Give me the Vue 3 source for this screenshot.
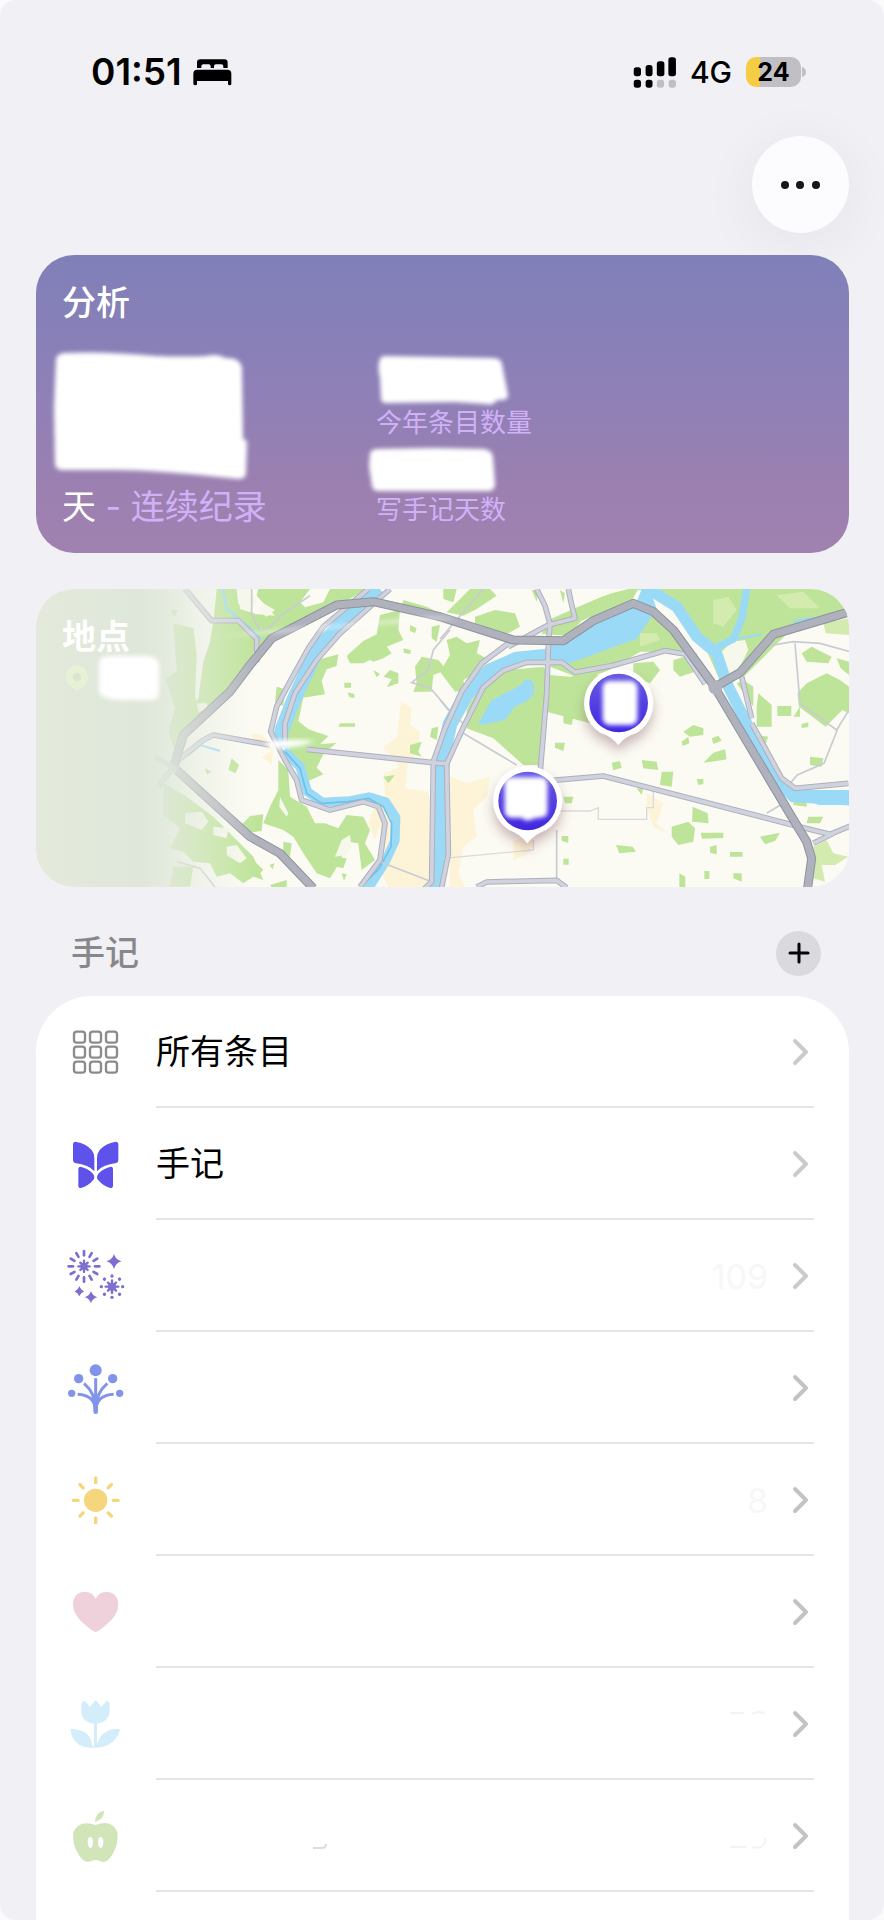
<script setup>
import { ref } from 'vue'

const journals = ref([
    { id: 'all', name: '所有条目', count: '', faded: true },
    { id: 'journal', name: '手记', count: '', faded: true },
    { id: 'fireworks', name: '', count: '109', faded: true },
    { id: 'sprout', name: '', count: '', faded: false },
    { id: 'sun', name: '', count: '8', faded: false },
    { id: 'heart', name: '', count: '', faded: false },
    { id: 'tulip', name: '', count: '', faded: false },
    { id: 'apple', name: '', count: '', faded: false }
])

// coins des neuf carrés de l'icône grille
const cells = []
for (const y of [395, 440, 485]) {
    for (const x of [132, 180, 228]) {
        cells.push({ x, y })
    }
}

const rays = [0, 30, 60, 90, 120, 150, 180, 210, 240, 270, 300, 330]
const sunRays = [0, 45, 90, 135, 180, 225, 270, 315]
</script>

<template>
    <div class="page">
        <!-- Barre d'état -->
        <header class="status">
            <div class="status-left">
                <span class="time">01:51</span>
                <svg class="bed" viewBox="399 86 117 81" aria-hidden="true">
                    <path d="M411 113V97q0-10 10-10h72q10 0 10 10v16h-13v-5q0-6-6-6h-16q-6 0-6 6v5h-10v-5q0-6-6-6h-16q-6 0-6 6v5z" />
                    <path d="M400 161v-31q0-12 12-12h90q12 0 12 12v31q0 4-5 4t-5-4v-9H411v9q0 4-5 4t-6-4z" />
                </svg>
            </div>
            <div class="status-right">
                <svg class="signal" viewBox="101 77 131 94" aria-hidden="true">
                    <rect x="102" y="108" width="22" height="27" rx="8" />
                    <rect x="138" y="101" width="21" height="34" rx="8" />
                    <rect x="172" y="90" width="23" height="45" rx="8" />
                    <rect x="207" y="78" width="23" height="57" rx="8" />
                    <rect x="102" y="146" width="22" height="24" rx="8" />
                    <rect x="138" y="146" width="21" height="24" rx="8" />
                    <rect x="172" y="146" width="22" height="24" rx="8" fill="#c0bfc4" />
                    <rect x="208" y="146" width="22" height="24" rx="8" fill="#c0bfc4" />
                </svg>
                <span class="network">4G</span>
                <div class="battery"><span>24</span></div>
                <svg class="nub" viewBox="0 0 4 10" aria-hidden="true"><path d="M0 0q4 1 4 5t-4 5z" fill="#c0bfc4" /></svg>
            </div>
        </header>

        <nav class="toolbar">
            <button class="more" type="button" aria-label="更多">
                <svg viewBox="0 0 40 10" aria-hidden="true">
                    <circle cx="4" cy="5" r="4" />
                    <circle cx="19" cy="5" r="4" />
                    <circle cx="35" cy="5" r="4" />
                </svg>
            </button>
        </nav>

        <main>
            <!-- Carte des statistiques -->
            <section class="card stats">
                <h2>分析</h2>
                <div class="stats-grid">
                    <div>
                        <svg class="streak-value" viewBox="0 0 200 156" aria-hidden="true">
                            <path class="soft" d="M2 26q40-2 92 3 30 1 50 0 12-3 19 2 15-1 17 10l1 71 4 2-1 32q0 6-8 6Q95 143 52 143L0 143q-7 0-7-7l-1-55 2-49q1-5 8-6z" />
                        </svg>
                        <p class="streak">天 <span>- 连续纪录</span></p>
                    </div>
                    <div>
                        <svg class="year-value" viewBox="0 0 140 80" aria-hidden="true">
                            <path class="soft" d="M4 32q1-3 5-3l108 2q8 0 9 6l6 31q0 5-6 5h-5q-4 6-11 4l-32-2-68 1q-5 0-5-5l-1-20q-3-12 0-19z" />
                        </svg>
                        <p class="label">今年条目数量</p>
                        <svg class="days-value" viewBox="0 0 140 55" aria-hidden="true">
                            <path class="soft" d="M-6 14q1-3 6-4l58-1 50 1q8 1 9 8l2 27q0 6-6 7H2q-5 0-6-5l-3-20z" />
                        </svg>
                        <p class="label">写手记天数</p>
                    </div>
                </div>
            </section>

            <!-- Carte des lieux -->
            <section class="card places">
                <svg class="map" viewBox="18 27 2439 894" preserveAspectRatio="xMidYMid slice" aria-hidden="true">
                    <defs>
                        <linearGradient id="fade">
                            <stop offset="0" stop-color="#e3eadc" />
                            <stop offset="0.48" stop-color="#dfe7da" />
                            <stop offset="0.6" stop-color="#e0e8db" stop-opacity="0.88" />
                            <stop offset="0.75" stop-color="#e6ece0" stop-opacity="0.55" />
                            <stop offset="1" stop-color="#eef2e6" stop-opacity="0" />
                        </linearGradient>
                        <linearGradient id="pin" x2="0" y2="1">
                            <stop offset="0" stop-color="#6a5ae2" />
                            <stop offset="1" stop-color="#4026e0" />
                        </linearGradient>
                        <filter id="blur" x="-30%" y="-30%" width="160%" height="160%"><feGaussianBlur stdDeviation="6" /></filter>
                        <filter id="shadow" x="-40%" y="-30%" width="180%" height="180%"><feDropShadow dx="0" dy="22" stdDeviation="18" flood-color="#7b4a55" flood-opacity="0.38" /></filter>
                    </defs>
                    <rect x="0" y="0" width="2480" height="950" fill="#fbfbf3" />

                    <!-- zones urbaines -->
                    <g fill="#fdf3d6">
                        <path d="M1115 365l30 20-5 50 30 20-5 60-30 30-10 80 70 10 10 60v226h-130l-30-60 20-70-20-60 20-90-5-60 50-20-50-60 40-30 10-80z" />
                        <path d="M665 462h25l40 30-5 60-30-20 30-20-55-20zM1035 670l-20 60 20 50 20-60z" />
                        <path d="M1260 590l50 20 70-20-10 60-40 40 10 80-40 30-15 80 40 81h-65zM1450 780l60-10-10 50-50 20zM1850 640l50 30-20 60 30 30-40-20-20-60z" />
                    </g>

                    <!-- forêts et parcs -->
                    <g fill="#bee499">
                        <path d="M560 27h60l5 45 50 30 60 5-55-60 5-20h155l-30 40 15 15 55-15 20-40h110L920 80 770 140 670 215l-10 60-110 110-45 45-45-25 30-30 15-20 15-110 20-60 10-60z" />
                        <path d="M430 130l60 15 10 80-5 120 10 60-20 50-50 60-20-60 20-70-30-90 35-20zM420 90h25l-12 20z" />
                        <path d="M1050 105l60-15-5 60 15 30-50 20 15 20-25 15-30 10-10-5-20 10h-40l-10-22 50-45 40-20zM1120 60l70 20 50 25-15 20-30-20-50-10-30-15zM1205 140l25-5-10 50-15-10z" />
                        <path d="M870 238l55-15-5 35-30 10-15 35 10 40-65 10-15 70 30 25 60 20-25 25 50-5-40 35-20 40 20 20-45 20-50-60-20-80 10-70z" />
                        <path d="M740 320l25 8-5 50-25-10zM1140 495l35-10-10 30 10 15-35-10zM1060 590l35-5-20 25zM930 430h45v10h-50zM943 308h20v15h-20zM953 337l20 5v12l-15-3zM1030 270l20 12-10 10zM1060 290l20-20 25 10v30l-35 12 15-25zM1120 205l22 5v12l-20-3zM1140 135l20 10-5 15-15-8z" />
                        <path d="M1175 230l50 10 25 30-40 15-5 50-55 0 10-25-5-50zM1205 445l20-5-5 40-20-10z" />
                        <path d="M605 535l22 20-10 25-22-10zM525 565l20 10-15 8zM660 708l40-5-5 50-40 5-30-15zM745 540l30 30 5 80 50 30 25 50 30 0 40 15 25-40 50 5 20 40-15 40 30 50-40 30-10-80-35-5-20 60-30 50-40-15-40-60-30-50-30-20-60-20 20-50 25-50z" />
                        <path d="M400 610l70 40 80 60 60 60 60 60 30 70-30-10-30 20-40-30-40 10-20-40-50-5-30-30-40-10 30-60-50-40zM430 860l60 0-10 60H420zM560 790l90 30 50 50-20 20-50-30-20-30zM760 785l25 5-5 40-20-10zM920 830l30 5-10 30-20-5zM935 880l15 3-8 20zM720 915l50-15v21h-45zM718 855l15-5-5 18z" />
                        <path d="M1240 27h40l-10 40-30-10zM1320 27h60l20 20-60 40-40 20-50-10 30-30zM1335 110l60-20 60 10 15 40-35 20-30 5-70-20zM1250 180l30-10 30 20 40-10-10 40 40 20-40 40-40 20 5 30-30 5-45-60 30-50z" />
                        <path d="M1820 27h640v75l-180 50-140 140-70 10-40-90-50-60-20-60-50-40zM1555 120l90-40 70-30 30-10 50-13h30l-20 35-150 60-40 45-80-5zM1505 30l20 0-5 35zM1590 30l15 10-5 30z" />
                        <path d="M1560 260l90-60 130-50 70-70 60 40 80 100-20 5-60-10-80 0-100 60-80 20z" />
                        <path d="M1310 390q40-90 120-120l110-10 20 25 60 5 60-15 40 15 0 130-40 10-130-35-10 80-10 80-50 0-90-80-80-30z" />
                        <path d="M1810 250l60-5 20 25-30 40-50-20zM1930 240l70-20 10 50-60 20-20-20z" />
                        <path d="M1600 405l30 5-5 25-25-5zM1575 488l30 0-5 25-25-10zM1745 548l25-5 5 20-25 8zM1835 540l45 5 5 25-45-5zM1895 575l35 0-5 45-35-5zM1960 455l30-20 30 10 0 20-40 5zM1955 485l20-15 3 20-20 8zM2045 475l20-8 10 15-25 10zM2020 548l30-30 35-10 5 30-30 5zM1600 650l30 0-5 20-20 0zM1820 625l20 0-5 20zM2000 597l20 0 0 15-15 3z" />
                        <path d="M1925 740l50-15 20 20-5 40-45 10-20-25zM1988 680l45 20 3 30-50-5zM2012 758h68v16l-64 2zM2190 770l60-12-15 25-30 10zM1758 795l50 5 10 15-50 5zM2040 800l20-5 0 28-20-5zM2100 816h38v14h-38zM1595 768l20 0v20l-20-5zM1600 836h16v18h-16zM2110 880l25 0 0 25-25-10zM1948 880l18 10v31h-18zM2023 873h15v24h-15z" />
                        <path d="M2315 220l30-20 60 30-10 20-65-5zM2330 310l60-30 40 20 27 20v80l-20-10-50 50-80-60-5-40zM2185 340l40 35v65h-45v-60zM2242 378h42v30h-42zM2315 432l20-5v14l-20 3zM2420 235l37 10v40l-25-20zM2340 530l40 5-5 25-35-5zM2335 710l45 0-10 20-40 0zM2140 300l30 20 0 60-50-70zM2290 410l20-30v30z" />
                        <path d="M2180 465l35 5-10 25zM2290 650l40 10 0 20-40-5z" />
                    </g>
                    <g fill="#d3ebae">
                        <path d="M2050 60l45-10 25 40-40 50-30-10zM2240 45l80-10 50 50-90 0zM2380 130l77-15v50l-70-5zM1830 160l50 0 10 20-60 20zM2350 800l40-20 20 40 45 10-40 25-40 0 10 50-35-10z" />
                    </g>
                    <!-- clairières -->
                    <g fill="#f6f8ec">
                        <path d="M625 27h40l15 40-20 30-30-10zM680 90l20-20 35 20-25 20zM465 700l50-5 20 30-20 25-50-20zM550 740l45 5-5 30-40-10zM590 800l30-5 30 40-20 15-40-25zM500 370l30 0 5 20-30 5zM750 650l25 50-5 10-22-30zM935 780l25-15 5 40-15 20-35 5z" />
                        <path d="M2075 215l30-30 40-5 10 30-30 60-30 20z" />
                    </g>

                    <!-- eau -->
                    <g fill="none" stroke="#9bdaf7" stroke-linejoin="round">
                        <path d="M1050 27l-90 75-100 110-70 150-35 90-5 50" stroke-width="44" />
                        <path d="M760 510l50 50 22 75 45 32 80-4 60-12 50 15 30 46-2 70-30 65-55 86" stroke-width="28" />
                        <path d="M765 515l45 50 20 75 45 30 80-5 60-10 45 25 25 50-2 70-35 65-55 55" stroke="#6dc2ed" stroke-width="5" />
                        <path d="M1580 225l-120 12-80 35-70 70-50 90-20 90-5 60v180l-20 180" stroke-width="44" />
                        <path d="M1860 30l80 50 60 90 60 50 30 90 60 120 90 170 50 50 170 10" stroke-width="34" />
                        <path d="M2150 27l-15 90-25 60-60 30" stroke-width="22" />
                        <path d="M2110 178l85-15M2290 125l60-12" stroke-width="7" />
                        <path d="M578 27l12 60 45 35 60 55M475 525l35-30 60 18" stroke-width="7" />
                    </g>
                    <g fill="#9bdaf7">
                        <path d="M1835 27l25 0 20 60-60 90-70 25-80 30-55 18-60-10-5-50 90-20 90-70 90-35z" />
                        <path d="M1345 430l40-70 60-30 50-30q20 20 0 60l-40 20-30 40-70 15z" />
                        <path d="M2280 620l70 10 107 0v45l-90 0-60-20z" />
                    </g>
                    <path d="M1476 320q10-25 22-18 18 12 10 40l-22 20q-15-10-10-42z" fill="none" stroke="#9bdaf7" stroke-width="7" />

                    <!-- petites routes -->
                    <g fill="none" stroke="#c9cbd3" stroke-width="5">
                        <path d="M665 27v75l25 50 30-10 40-40 80-55M440 845l70 20 45 56M1260 150l-50 60-15 60-50 38 55 15 60 70M1360 27l-130 150M1230 360l25 30 50 45M1300 460l160 95" />
                        <path d="M1580 750l0 150M2170 205l120-20 80 5 90 25M2295 190l15 180 110 80 37-60M2422 450l-40 100-80 35-30 35M2210 700l50-30M1050 845l180 70" />
                        <path d="M1590 693l90 0 25-10v35h145v-35h20v-50M1510 780v30l-270 25" stroke="#d9dade" stroke-width="4" />
                    </g>

                    <!-- routes secondaires -->
                    <g fill="none" stroke-linejoin="round">
                        <g stroke="#adb0be" stroke-width="17">
                            <path d="M465 27l80 95 80 0 55 55v70M385 620l60-80 75-60 30-15 170 30M830 508l400 42h20" />
                            <path d="M1015 27L880 140 835 205 780 305 740 380 722 455 765 540 800 600 815 660 900 690 1000 665 1045 680 1065 730 1050 840 990 921M1080 27L930 160 860 240 795 340 765 430 765 500" />
                            <path d="M1435 190l-80 60-60 85-50 110-35 100-5 360-30 30M1580 247l-90 0-70 25-60 50-60 120-50 110 5 270-20 100" />
                            <path d="M1520 27l25 50 15 55-5 70-5 140-20 240M1435 200l120-65 80-20-10-40-10-48M1555 247l40 0 40 30 110-20 160-45 60 10 60 90M1565 183h50" />
                            <path d="M1560 602l160-14 600 155 80 20 60-25M2350 790l60-30M1340 921l30-15 210-5 30 22M2135 290l30 125M2165 430l90 165 40 30 160-15" />
                        </g>
                        <g stroke="#d0d3de" stroke-width="11">
                            <path d="M465 27l80 95 80 0 55 55v70M385 620l60-80 75-60 30-15 170 30M830 508l400 42h20" />
                            <path d="M1015 27L880 140 835 205 780 305 740 380 722 455 765 540 800 600 815 660 900 690 1000 665 1045 680 1065 730 1050 840 990 921M1080 27L930 160 860 240 795 340 765 430 765 500" />
                            <path d="M1435 190l-80 60-60 85-50 110-35 100-5 360-30 30M1580 247l-90 0-70 25-60 50-60 120-50 110 5 270-20 100" />
                            <path d="M1520 27l25 50 15 55-5 70-5 140-20 240M1435 200l120-65 80-20-10-40-10-48M1555 247l40 0 40 30 110-20 160-45 60 10 60 90M1565 183h50" />
                            <path d="M1560 602l160-14 600 155 80 20 60-25M2350 790l60-30M1340 921l30-15 210-5 30 22M2135 290l30 125M2165 430l90 165 40 30 160-15" />
                        </g>

                        <!-- grands axes -->
                        <g stroke="#8f929f" stroke-width="27">
                            <path d="M440 570l220 200 90 50 100 105M430 565l30-100 140-130 60-80 65-80 60-30 135-70 110-10 200 45 220 70 150 2 90-60 120-52 60 25 60 55 120 165 220 370 60 100 15 50-15 110M2060 318l70-40 100-115 230-68" />
                        </g>
                        <g stroke="#afb2bd" stroke-width="21">
                            <path d="M440 570l220 200 90 50 100 105M430 565l30-100 140-130 60-80 65-80 60-30 135-70 110-10 200 45 220 70 150 2 90-60 120-52 60 25 60 55 120 165 220 370 60 100 15 50-15 110M2060 318l70-40 100-115 230-68" />
                            <path d="M375 530l65 40" stroke="#c6cac8" stroke-width="16" />
                        </g>
                    </g>
                    <circle cx="2056" cy="322" r="21" fill="#afb2bd" />
                    <path d="M705 488q40-14 150-5-50 22-120 22-30-5-30-17z" fill="#fff" filter="url(#blur)" />
                    <path d="M570 172q100-22 430-42 200-28 280-14-400 30-710 56z" fill="#fff" opacity="0.5" filter="url(#blur)" />

                    <rect x="0" y="0" width="680" height="950" fill="url(#fade)" />

                    <!-- repères -->
                    <g filter="url(#shadow)" fill="#fff">
                        <path d="M1766 266a104 104 0 0 1 55 192q-36 10-56 37-20-27-54-37a104 104 0 0 1 55-192z" />
                        <path d="M1493 558a104 104 0 0 1 55 192q-36 12-56 40-20-28-54-40a104 104 0 0 1 55-192z" />
                    </g>
                    <circle cx="1766" cy="369" r="88" fill="url(#pin)" />
                    <circle cx="1493" cy="663" r="88" fill="url(#pin)" />
                    <rect x="1718" y="303" width="104" height="132" rx="20" fill="#fff" filter="url(#blur)" />
                    <path d="M1424 610q0-18 18-18h90q20 0 20 18v84q0 18-18 18l-25 4q-18 12-34-3h-30q-21 0-21-20z" fill="#fff" filter="url(#blur)" />
                </svg>
                <div class="places-text">
                    <h2>地点</h2>
                    <div class="places-count">
                        <svg class="place-icon" viewBox="0 0 26 28" aria-hidden="true">
                            <path d="M13 1a12 12 0 0 1 4 23l-4 3-4-3a12 12 0 0 1 4-23z" fill="#e6f1d6" />
                            <circle cx="13" cy="13" r="4" fill="#dae5d2" />
                        </svg>
                        <svg class="place-value" viewBox="0 0 62 46" aria-hidden="true">
                            <path class="soft" d="M1 10q0-9 9-9h40q10 0 11 10v26q0 8-8 8H20Q1 43 1 36z" />
                        </svg>
                    </div>
                </div>
            </section>

            <div class="list-head">
                <h3>手记</h3>
                <button class="add" type="button" aria-label="添加">
                    <svg viewBox="0 0 22 22" aria-hidden="true"><path d="M11 2v18M2 11h18" /></svg>
                </button>
            </div>

            <!-- Liste des carnets -->
            <ul class="journals">
                <li v-for="item in journals" :key="item.id">
                    <a href="#" :aria-label="item.name || item.id">
                        <svg v-if="item.id === 'all'" class="icon" viewBox="102 357 192 192">
                            <rect v-for="(c, i) in cells" :key="i" :x="c.x" :y="c.y" width="33" height="33" rx="8" fill="none" stroke="#8b8b8d" stroke-width="7" />
                        </svg>
                        <svg v-else-if="item.id === 'journal'" class="icon" viewBox="102 693 192 192" fill="#5f52ea">
                            <path d="M129 733q0-8 8-8 32 6 48 25 8 10 8 24v40q-16-20-58-25-6-2-6-8zM265 733q0-8-8-8-32 6-48 25-8 10-8 24v40q16-20 58-25 6-2 6-8z" />
                            <path d="M145 806q0-6 7-6 24 6 37 21 8 11 0 20-14 17-36 23-8 0-8-7zM249 806q0-6-7-6-24 6-37 21-8 11 0 20 14 17 36 23 8 0 8-7z" />
                        </svg>
                        <svg v-else-if="item.id === 'fireworks'" class="icon" viewBox="42 69 192 192" fill="#7b6fcf" stroke="#7b6fcf" stroke-linecap="round">
                            <g stroke-width="8">
                                <path v-for="r in rays" :key="r" d="M102 106v-13" :transform="`rotate(${r} 102 139)`" />
                            </g>
                            <path d="M102 122v34M85 139h34M91 128l22 22M91 150l22-22" stroke-width="7" />
                            <path d="M186 181v38M167 200h38M174 188l24 24M174 212l24-24" stroke-width="7" />
                            <g stroke="none">
                                <circle v-for="r in sunRays" :key="r" cx="186" cy="168" r="5" :transform="`rotate(${r} 186 200)`" />
                                <circle cx="102" cy="139" r="11" />
                                <circle cx="186" cy="200" r="12" />
                                <path d="M192 102q5 17 23 22-18 5-23 23-5-18-23-23 18-5 23-22zM88 198q4 12 15 16-11 4-15 15-4-11-15-15 11-4 15-16zM123 213q4 14 19 19-15 4-19 18-4-14-19-18 15-5 19-19z" />
                            </g>
                        </svg>
                        <svg v-else-if="item.id === 'sprout'" class="icon" viewBox="42 405 192 192" fill="#8294ea">
                            <circle cx="137" cy="451" r="18" />
                            <circle cx="86" cy="476" r="14" />
                            <circle cx="188" cy="476" r="14" />
                            <circle cx="65" cy="520" r="11" />
                            <circle cx="209" cy="520" r="11" />
                            <g fill="none" stroke="#8294ea" stroke-width="9">
                                <path d="M137 475v96M102 490q35 30 35 78 0-48 35-78M83 523q52 2 54 50 2-48 54-50" />
                                <path d="M137 550v25" stroke-width="14" stroke-linecap="round" />
                            </g>
                        </svg>
                        <svg v-else-if="item.id === 'sun'" class="icon" viewBox="42 81 192 192">
                            <circle cx="137" cy="181" r="35" fill="#f6d67c" />
                            <path v-for="r in sunRays" :key="r" d="M137 128v-14" :transform="`rotate(${r} 137 181)`" stroke="#f6d67c" stroke-width="10" stroke-linecap="round" />
                        </svg>
                        <svg v-else-if="item.id === 'heart'" class="icon" viewBox="42 417 192 192">
                            <path d="M137 576q-10-2-30-20-38-31-38-62 1-36 34-39 25 0 34 22 10-22 34-22 33 3 34 39 0 31-38 62-20 18-30 20z" fill="#efd1dc" />
                        </svg>
                        <svg v-else-if="item.id === 'tulip'" class="icon" viewBox="42 93 192 192" fill="#d3edfb">
                            <path d="M94 134q3-12 10-11l16 18 13-17q4-3 8 0l13 17 15-18q8-2 10 11v21q-2 30-38 36v60q12-37 48-43 15-3 21 0-5 29-37 48-19 9-43 7-25 2-42-8-23-16-26-44-1-6 6-4 54 4 58 47l6 6v-69q-37-6-38-36z" />
                        </svg>
                        <svg v-else class="icon" viewBox="42 429 192 192">
                            <path d="M135 486q1-29 27-34 1 25-27 34zM137 495q48-18 65 21 5 39-17 71-17 26-35 16-13-6-26 0-20 9-36-16-23-33-18-71 18-38 67-21z" fill="#d1e5b8" />
                            <ellipse cx="121" cy="547" rx="8" ry="17" fill="#fff" />
                            <ellipse cx="152" cy="547" rx="8" ry="17" fill="#fff" />
                        </svg>

                        <span class="row-body">
                            <span class="row-name">{{ item.name }}</span>
                            <svg v-if="item.id === 'apple'" class="smudge" viewBox="0 0 16 8" aria-hidden="true">
                                <path d="M1 7h9q4 0 4-4" fill="none" stroke="#dcdcdd" stroke-width="2" />
                            </svg>
                            <svg v-if="item.id === 'tulip'" class="trace" viewBox="0 0 40 28" aria-hidden="true">
                                <path d="M2 3h14M24 4q6-4 13 0" />
                            </svg>
                            <svg v-if="item.id === 'apple'" class="trace" viewBox="0 0 40 28" aria-hidden="true">
                                <path d="M2 25h16M24 25q14 3 13-9" />
                            </svg>
                            <span v-if="item.count" class="count">{{ item.count }}</span>
                            <svg class="chevron" :class="{ faded: item.faded }" viewBox="0 0 18 28" aria-hidden="true">
                                <path d="M3 3l11 11L3 25" />
                            </svg>
                        </span>
                    </a>
                </li>
            </ul>
        </main>
    </div>
</template>

<style>
body {
    background: #fbfbfc;
}
</style>

<style scoped>
.page {
    min-height: 100vh;
    display: flex;
    flex-direction: column;
    background: #f1f0f5;
    border-radius: 16px;
    overflow: hidden;
    font-family: Inter, "Noto Sans CJK SC", sans-serif;
    color: #000;
}

h2,
h3,
p,
ul {
    margin: 0;
    padding: 0;
}

svg {
    display: block;
}

/* barre d'état */
.status {
    height: 96px;
    padding: 24px 78px 0 91px;
    display: flex;
    align-items: center;
    justify-content: space-between;
}

.status-left,
.status-right {
    display: flex;
    align-items: center;
}

.time {
    font-size: 37px;
    font-weight: 600;
    line-height: 44px;
}

.bed {
    width: 39px;
    height: 27px;
    margin-left: 11px;
}

.signal {
    width: 44px;
    height: 31px;
}

.network {
    margin-left: 13px;
    font-size: 30px;
    font-weight: 500;
}

.battery {
    width: 55px;
    height: 30px;
    margin-left: 14px;
    border-radius: 10px;
    background: linear-gradient(90deg, #f5cd45 25%, #c0bfc4 25%);
    font-size: 25px;
    font-weight: 700;
    line-height: 30px;
    text-align: center;
}

.nub {
    width: 4px;
    height: 10px;
    margin-left: 1px;
}

.toolbar {
    display: flex;
    justify-content: flex-end;
    padding: 16px 35px 22px;
}

.more {
    width: 97px;
    height: 97px;
    padding: 0;
    border: none;
    border-radius: 50%;
    background: #fcfcff;
    box-shadow: 0 10px 60px rgba(0, 0, 0, 0.06);
    display: flex;
    align-items: center;
    justify-content: center;
    cursor: pointer;
}

.more svg {
    width: 40px;
    height: 10px;
    fill: #17171a;
}

main {
    flex: 1;
    display: flex;
    flex-direction: column;
    padding: 0 35px 0 36px;
}

/* cartes */
.card {
    border-radius: 38px;
    padding: 24px 26px 22px;
}

.card h2 {
    font-size: 34px;
    font-weight: 500;
    line-height: 48px;
    color: #fff;
}

.soft {
    fill: #fff;
    filter: blur(2px);
}

.stats {
    background: linear-gradient(180deg, #8080b9 0%, #8e80b7 45%, #9c80b0 80%, #a082b0 100%);
}

.stats-grid {
    display: grid;
    grid-template-columns: 314px 1fr;
}

.stats-grid svg {
    overflow: visible;
}

.streak-value {
    width: 200px;
    height: 156px;
}

.streak {
    font-size: 34px;
    line-height: 48px;
    color: #fff;
}

.streak span,
.label {
    color: #d0b1f8;
}

.year-value {
    width: 140px;
    height: 80px;
}

.days-value {
    width: 140px;
    height: 55px;
}

.label {
    font-size: 26px;
    line-height: 32px;
}

.places {
    position: relative;
    min-height: 252px;
    margin-top: 36px;
    overflow: hidden;
}

.map {
    position: absolute;
    inset: 0;
    width: 100%;
    height: 100%;
}

.places-text {
    position: relative;
}

.places h2 {
    font-weight: 700;
}

.places-count {
    display: flex;
    align-items: center;
    gap: 8px;
    height: 34px;
    padding-left: 2px;
}

.place-icon {
    width: 26px;
    height: 28px;
}

.place-value {
    width: 62px;
    height: 46px;
    overflow: visible;
}

/* liste */
.list-head {
    display: flex;
    align-items: center;
    justify-content: space-between;
    height: 68px;
    padding: 32px 28px 9px 35px;
}

.list-head h3 {
    font-size: 34px;
    font-weight: 500;
    line-height: 48px;
    color: #88878c;
}

.add {
    width: 45px;
    height: 45px;
    padding: 0;
    border: none;
    border-radius: 50%;
    background: #dad9de;
    display: flex;
    align-items: center;
    justify-content: center;
    cursor: pointer;
}

.add svg {
    width: 22px;
    height: 22px;
}

.add path {
    stroke: #050507;
    stroke-width: 3;
    stroke-linecap: round;
}

.journals {
    flex: 1;
    list-style: none;
    background: #fff;
    border-radius: 56px 56px 0 0;
}

.journals a {
    display: flex;
    align-items: stretch;
    height: 112px;
    padding: 0 35px 0 28px;
    gap: 28px;
    color: #000;
    text-decoration: none;
}

.icon {
    width: 64px;
    height: 110px;
    flex: none;
}

.row-body {
    flex: 1;
    display: flex;
    align-items: center;
    border-bottom: 2px solid #e5e5e7;
    padding: 2px 4px 0 0;
}

.row-name {
    flex: 1;
    font-size: 34px;
    line-height: 48px;
}

.count {
    margin-right: 24px;
    font-size: 34px;
    color: #f7f7f8;
}

.smudge {
    width: 16px;
    height: 8px;
    margin: 18px 400px 0 0;
}

.trace {
    width: 40px;
    height: 28px;
    margin-right: 24px;
}

.trace path {
    fill: none;
    stroke: #f3f3f4;
    stroke-width: 2;
}

.chevron {
    width: 18px;
    height: 28px;
}

.chevron path {
    fill: none;
    stroke: #c3c3c5;
    stroke-width: 4;
    stroke-linecap: round;
    stroke-linejoin: round;
}

.chevron.faded path {
    stroke: #cbcbcd;
}
</style>
